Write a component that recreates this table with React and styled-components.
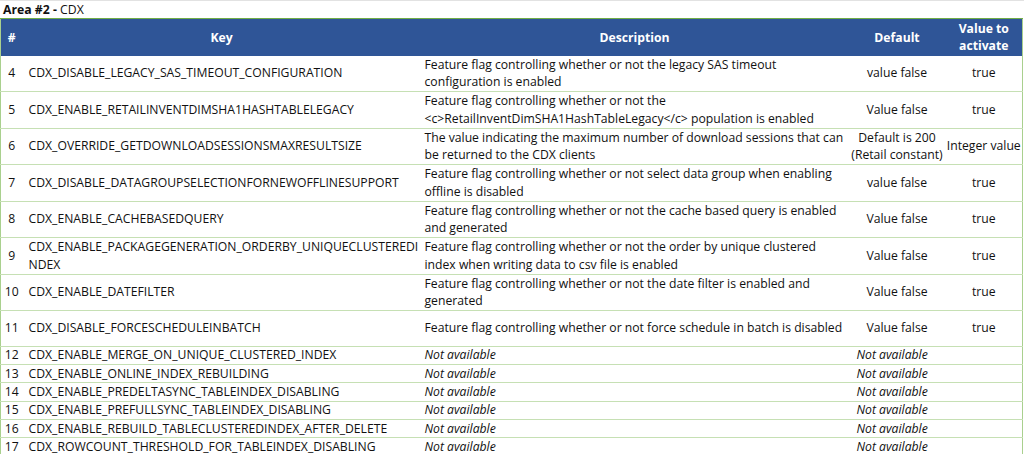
import React from "react";
import styled, { createGlobalStyle } from "styled-components";

const GlobalStyle = createGlobalStyle`
  html, body {
    margin: 0;
    padding: 0;
    background: #ffffff;
  }
  body {
    font-family: "Open Sans", "Liberation Sans", sans-serif;
    color: #111111;
  }
`;

const Sheet = styled.div`
  width: 1024px;
  height: 454px;
  overflow: hidden;
  background: #ffffff;
`;

const Title = styled.div`
  height: 18px;
  box-sizing: border-box;
  border-top: 1px solid #e2e2e2;
  padding-left: 3px;
  font-size: 12.25px;
  line-height: 17px;
  color: #111;

  b {
    font-weight: 700;
  }
`;

const Table = styled.table`
  width: 1022px;
  table-layout: fixed;
  border-collapse: collapse;
  border-left: 1px solid #a9d08e;
  border-right: 1px solid #a9d08e;
  font-size: 12.2px;
`;

const HeadRow = styled.tr`
  height: 37px;
  background: #2f5597;
  border-top: 1px solid #70ad47;
`;

const HeadCell = styled.th`
  color: #ffffff;
  font-weight: 700;
  font-size: 12.2px;
  line-height: 17px;
  padding: 0 2px;
  text-align: center;
  vertical-align: middle;
  white-space: nowrap;
`;

const Row = styled.tr`
  height: ${(p) => (p.compact ? "18.4px" : "35.5px")};
  border-bottom: 1px solid #c6e0b4;
`;

const Cell = styled.td`
  padding: ${(p) => p.pad || "0 4px"};
  line-height: ${(p) => (p.compact ? "16px" : "17.75px")};
  text-align: ${(p) => p.align || "left"};
  font-style: ${(p) => (p.italic ? "italic" : "normal")};
  vertical-align: middle;
  white-space: nowrap;
  overflow: visible;
`;

const rows = [
  {
    n: 4,
    key: "CDX_DISABLE_LEGACY_SAS_TIMEOUT_CONFIGURATION",
    desc: ["Feature flag controlling whether or not the legacy SAS timeout", "configuration is enabled"],
    def: ["value false"],
    val: "true",
  },
  {
    n: 5,
    key: "CDX_ENABLE_RETAILINVENTDIMSHA1HASHTABLELEGACY",
    desc: ["Feature flag controlling whether or not the", "<c>RetailInventDimSHA1HashTableLegacy</c> population is enabled"],
    def: ["Value false"],
    val: "true",
  },
  {
    n: 6,
    key: "CDX_OVERRIDE_GETDOWNLOADSESSIONSMAXRESULTSIZE",
    desc: ["The value indicating the maximum number of download sessions that can", "be returned to the CDX clients"],
    def: ["Default is 200", "(Retail constant)"],
    val: "Integer value",
  },
  {
    n: 7,
    key: "CDX_DISABLE_DATAGROUPSELECTIONFORNEWOFFLINESUPPORT",
    desc: ["Feature flag controlling whether or not select data group when enabling", "offline is disabled"],
    def: ["value false"],
    val: "true",
  },
  {
    n: 8,
    key: "CDX_ENABLE_CACHEBASEDQUERY",
    desc: ["Feature flag controlling whether or not the cache based query is enabled", "and generated"],
    def: ["Value false"],
    val: "true",
  },
  {
    n: 9,
    key: ["CDX_ENABLE_PACKAGEGENERATION_ORDERBY_UNIQUECLUSTEREDI", "NDEX"],
    desc: ["Feature flag controlling whether or not the order by unique clustered", "index when writing data to csv file is enabled"],
    def: ["Value false"],
    val: "true",
  },
  {
    n: 10,
    key: "CDX_ENABLE_DATEFILTER",
    desc: ["Feature flag controlling whether or not the date filter is enabled and", "generated"],
    def: ["Value false"],
    val: "true",
  },
  {
    n: 11,
    key: "CDX_DISABLE_FORCESCHEDULEINBATCH",
    desc: ["Feature flag controlling whether or not force schedule in batch is disabled"],
    def: ["Value false"],
    val: "true",
  },
];

const missing = [
  [12, "CDX_ENABLE_MERGE_ON_UNIQUE_CLUSTERED_INDEX"],
  [13, "CDX_ENABLE_ONLINE_INDEX_REBUILDING"],
  [14, "CDX_ENABLE_PREDELTASYNC_TABLEINDEX_DISABLING"],
  [15, "CDX_ENABLE_PREFULLSYNC_TABLEINDEX_DISABLING"],
  [16, "CDX_ENABLE_REBUILD_TABLECLUSTEREDINDEX_AFTER_DELETE"],
  [17, "CDX_ROWCOUNT_THRESHOLD_FOR_TABLEINDEX_DISABLING"],
];

const Lines = ({ lines }) =>
  (Array.isArray(lines) ? lines : [lines]).map((l, i) => (
    <React.Fragment key={i}>
      {i > 0 && <br />}
      {l}
    </React.Fragment>
  ));

export default function App() {
  return (
    <Sheet>
      <GlobalStyle />
      <Title>
        <b>Area #2 -</b> CDX
      </Title>
      <Table>
        <colgroup>
          <col style={{ width: 22 }} />
          <col style={{ width: 398 }} />
          <col style={{ width: 428 }} />
          <col style={{ width: 97 }} />
          <col style={{ width: 77 }} />
        </colgroup>
        <thead>
          <HeadRow>
            <HeadCell>#</HeadCell>
            <HeadCell>Key</HeadCell>
            <HeadCell>Description</HeadCell>
            <HeadCell>Default</HeadCell>
            <HeadCell>
              Value to
              <br />
              activate
            </HeadCell>
          </HeadRow>
        </thead>
        <tbody>
          {rows.map((r) => (
            <Row key={r.n}>
              <Cell align="center" pad="0">
                {r.n}
              </Cell>
              <Cell pad="0 2px 0 6px">
                <Lines lines={r.key} />
              </Cell>
              <Cell>
                <Lines lines={r.desc} />
              </Cell>
              <Cell align="center" pad="0">
                <Lines lines={r.def} />
              </Cell>
              <Cell align="center" pad="0">
                {r.val}
              </Cell>
            </Row>
          ))}
          {missing.map(([n, key]) => (
            <Row key={n} compact>
              <Cell compact align="center" pad="0">
                {n}
              </Cell>
              <Cell compact pad="0 2px 0 6px">
                {key}
              </Cell>
              <Cell compact italic>
                Not available
              </Cell>
              <Cell compact italic pad="0 0 0 8px">
                Not available
              </Cell>
              <Cell compact />
            </Row>
          ))}
        </tbody>
      </Table>
    </Sheet>
  );
}
